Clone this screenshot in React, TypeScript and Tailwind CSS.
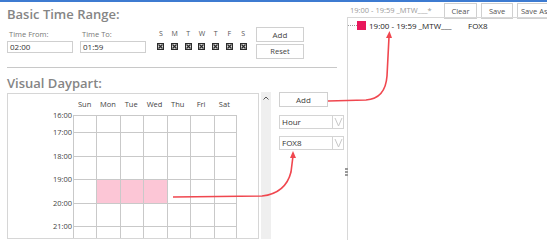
import React from "react";

const font = { fontFamily: '"Open Sans", "Noto Sans", sans-serif' };

const days = ["S", "M", "T", "W", "T", "F", "S"];
const longDays = ["Sun", "Mon", "Tue", "Wed", "Thu", "Fri", "Sat"];
const hours = ["16:00", "17:00", "18:00", "19:00", "20:00", "21:00"];
const rowHeights = ["h-[17px]", "h-[23.5px]", "h-[23.5px]", "h-[23.5px]", "h-[23.5px]", "h-[23.5px]"];

function DayBox() {
  return (
    <svg width="7" height="7" viewBox="0 0 7 7">
      <rect x="0" y="0" width="7" height="7" fill="#2b2b2b" />
      <rect x="1" y="1" width="5" height="5" fill="#d8d8d8" />
      <path d="M1.5 1.5 L5.5 5.5 M5.5 1.5 L1.5 5.5" stroke="#2b2b2b" strokeWidth="1.2" />
    </svg>
  );
}

function Select({ value }: { value: string }) {
  return (
    <div className="flex h-[14px] w-[65px] border border-[#d4d4d4] bg-white">
      <div className="flex-1 pl-[2px] text-[8px] leading-[12px] text-[#333]">{value}</div>
      <div className="flex w-[11px] items-center justify-center border-l border-[#d4d4d4]">
        <svg width="9" height="10" viewBox="0 0 9 10">
          <path d="M1 1 L4.5 9 L8 1" fill="none" stroke="#c8c8c8" strokeWidth="1" />
        </svg>
      </div>
    </div>
  );
}

export default function App() {
  return (
    <div className="relative h-[240px] w-[547px] overflow-hidden bg-white" style={font}>
      <div className="h-[2px] bg-[#3d7bd1]" />
      <div className="flex h-[238px]">
        {/* left side */}
        <div className="w-[347px] shrink-0 pl-[7px]">
          <h2 className="mt-[3px] h-[18px] text-[13px] font-semibold leading-[18px] text-[#858585]">
            Basic Time Range:
          </h2>
          <div className="mt-[4px] flex items-start">
            <div className="mt-[2px] w-[66px]">
              <div className="h-[10px] pl-[2px] text-[7.5px] leading-[10px] text-[#777]">Time From:</div>
              <div className="mt-[2px] h-[12px] border border-[#cfcfcf] pl-[2px] text-[8px] leading-[10px] text-[#333]">
                02:00
              </div>
            </div>
            <div className="ml-[7px] mt-[2px] w-[66px]">
              <div className="h-[10px] pl-[2px] text-[7.5px] leading-[10px] text-[#777]">Time To:</div>
              <div className="mt-[2px] h-[12px] border border-[#cfcfcf] pl-[2px] text-[8px] leading-[10px] text-[#333]">
                01:59
              </div>
            </div>
            <div className="ml-[8px] mt-[2px] grid w-[96px] grid-cols-7">
              {days.map((d, i) => (
                <div key={i} className="flex flex-col items-center">
                  <div className="h-[10px] text-[7px] leading-[10px] text-[#555]">{d}</div>
                  <div className="mt-[4px]">
                    <DayBox />
                  </div>
                </div>
              ))}
            </div>
            <div className="ml-[6px] flex flex-col gap-[2px]">
              <button className="h-[15px] w-[48px] border border-[#d0d0d0] bg-white text-[8px] leading-[13px] text-[#444]">
                Add
              </button>
              <button className="h-[15px] w-[48px] border border-[#d0d0d0] bg-white text-[7.5px] leading-[13px] text-[#444]">
                Reset
              </button>
            </div>
          </div>
          <div className="mt-[8px] h-[1px] w-[330px] bg-[#c8c8c8]" />
          <h2 className="mt-[6px] h-[18px] text-[13px] font-semibold leading-[18px] text-[#858585]">
            Visual Daypart:
          </h2>
          <div className="mt-[1px] flex items-start">
            {/* daypart grid */}
            <div className="h-[146px] w-[252px] overflow-hidden border border-[#d6d6d6] pt-[5px]">
              <div className="ml-[65px] grid w-[163px] grid-cols-7">
                {longDays.map((d) => (
                  <div key={d} className="h-[11px] text-center text-[7.5px] leading-[11px] text-[#444]">
                    {d}
                  </div>
                ))}
              </div>
              <div className="mt-[5px] flex">
                <div className="-mt-[5px] w-[65px] pr-[1px]">
                  {hours.map((h, i) => (
                    <div key={h} className={`${rowHeights[i]} text-right text-[7.5px] leading-[10px] text-[#444]`}>
                      {h}
                    </div>
                  ))}
                </div>
                <div className="w-[164px]">
                  {hours.map((h, r) => (
                    <div key={h} className={`${rowHeights[r]} grid grid-cols-7 border-t border-[#c9c9c9]`}>
                      {longDays.map((d, c) => (
                        <div
                          key={d}
                          className={`border-l border-[#c9c9c9] last:border-r ${
                            r === 3 && c >= 1 && c <= 3 ? "bg-[#fcc6d6]" : ""
                          }`}
                        />
                      ))}
                    </div>
                  ))}
                </div>
              </div>
            </div>
            {/* scroll bar */}
            <div className="ml-[2px] -mt-[1px] flex h-[147px] w-[10px] justify-center bg-[#efefef] pt-[4px]">
              <svg width="6" height="4" viewBox="0 0 6 4">
                <path d="M0.5 3.5 L3 1 L5.5 3.5" fill="none" stroke="#555" strokeWidth="1" />
              </svg>
            </div>
            {/* controls */}
            <div className="ml-[8px] -mt-[1px] flex flex-col">
              <button className="h-[15px] w-[49px] border border-[#d0d0d0] bg-white text-[8px] leading-[13px] text-[#444]">
                Add
              </button>
              <div className="mt-[8px]">
                <Select value="Hour" />
              </div>
              <div className="mt-[7px]">
                <Select value="FOX8" />
              </div>
            </div>
          </div>
        </div>

        {/* right side */}
        <div className="min-w-0 flex-1 overflow-hidden">
          <div className="flex h-[15px] items-start pt-[1px]">
            <div className="ml-[3px] w-[93px] shrink-0 text-[7.5px] leading-[14px] text-[#9a9a9a]">19:00 - 19:59 _MTW___*</div>
            <button className="ml-[1px] h-[16px] w-[33px] shrink-0 border border-[#d0d0d0] bg-white text-[7.5px] leading-[14px] text-[#555]">
              Clear
            </button>
            <button className="ml-[4px] h-[16px] w-[32px] shrink-0 border border-[#d0d0d0] bg-white text-[7.5px] leading-[14px] text-[#555]">
              Save
            </button>
            <button className="ml-[4px] h-[16px] w-[40px] shrink-0 whitespace-nowrap border border-[#d0d0d0] bg-white pl-[3px] text-left text-[7.5px] leading-[14px] text-[#555]">
              Save As
            </button>
          </div>
          <div className="relative h-[223px] border-l border-t border-[#d8d8d8]">
            <div className="flex items-center pt-[2px]">
              <div className="w-[9px] border-t border-dotted border-[#999]" />
              <div className="h-[9px] w-[9px] bg-[#e8185c]" />
              <div className="ml-[3px] w-[99px] text-[8px] leading-[11px] text-[#222]">19:00 - 19:59 _MTW___</div>
              <div className="text-[8px] leading-[11px] text-[#222]">FOX8</div>
            </div>
          </div>
        </div>
      </div>

      {/* splitter grip */}
      <div className="absolute left-[345px] top-[168px] flex flex-col gap-[1px]">
        <div className="h-[2px] w-[3px] bg-[#999]" />
        <div className="h-[2px] w-[3px] bg-[#999]" />
        <div className="h-[2px] w-[3px] bg-[#999]" />
      </div>

      {/* annotation arrows */}
      <svg className="pointer-events-none absolute left-0 top-0" width="547" height="240" viewBox="0 0 547 240">
        <path
          d="M173 197 L262 196 C280 194 288 184 291 172 L293 156"
          fill="none"
          stroke="#f0474f"
          strokeWidth="1.6"
        />
        <path d="M290 158 L293 151 L296 158 Z" fill="#f0474f" />
        <path
          d="M328 101 L366 100 C380 99 386 90 387 76 L389 37"
          fill="none"
          stroke="#f0474f"
          strokeWidth="1.6"
        />
        <path d="M386 38 L389.5 31 L392 38 Z" fill="#f0474f" />
      </svg>
    </div>
  );
}
